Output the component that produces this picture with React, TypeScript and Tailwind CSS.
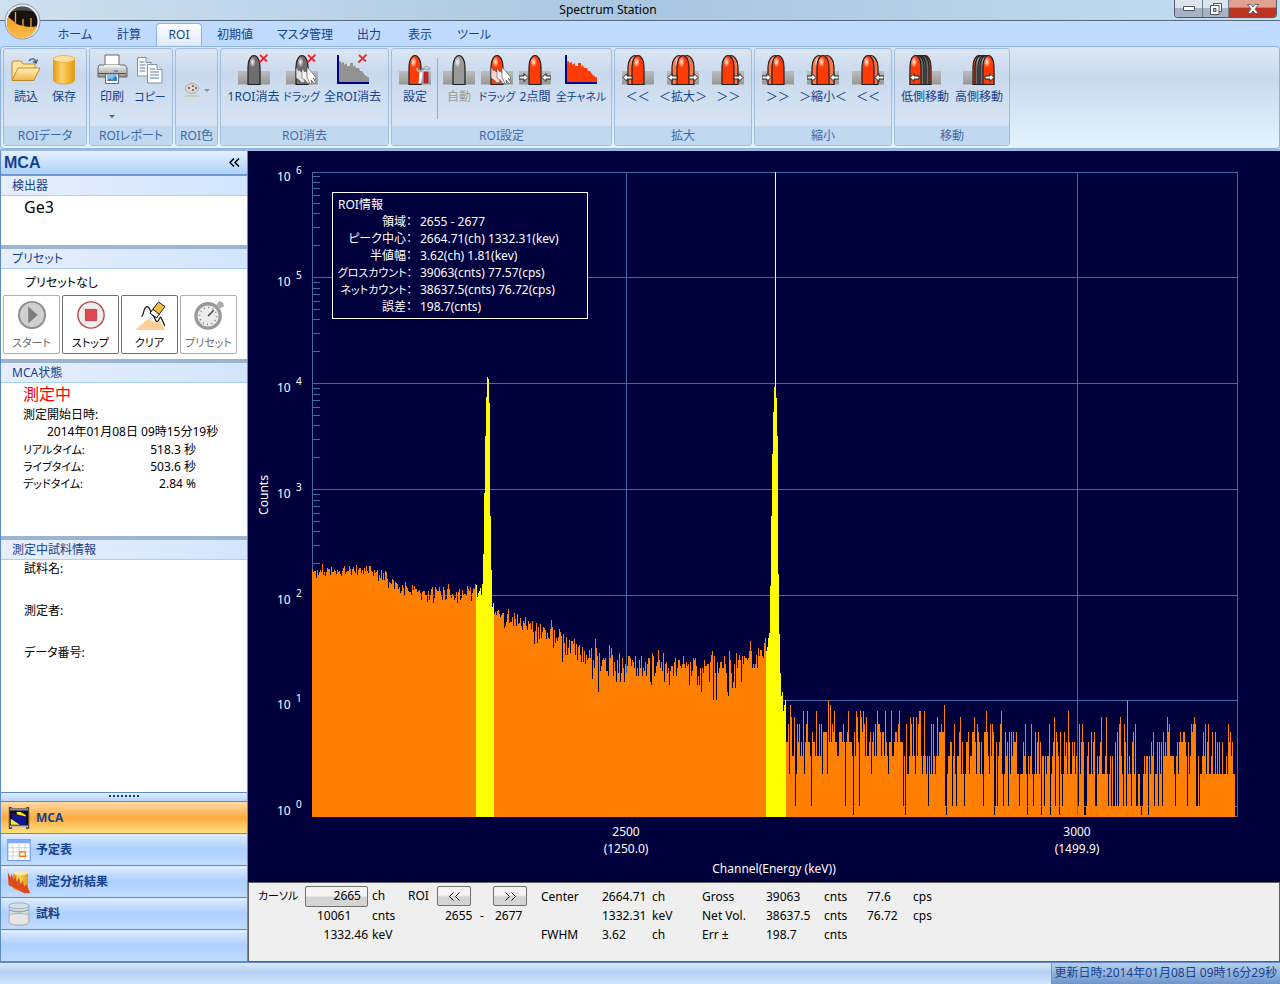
// App.tsx
// Spectrum Station main window: ribbon, MCA side panel and log-scale spectrum view

import type { ReactNode } from 'react';

/* ---------- icons ---------- */

const RED = '#ff3c05';
const GREY = '#6e6e6e';

function Hump({ x = 10, w = 12, fill = RED }: { x?: number; w?: number; fill?: string }) {
  const r = x + w;
  const m = x + w / 2;
  return (
    <g>
      <path
        d={`M${x} 30.5V13C${x} 6 ${m - 3} 1.5 ${m} 1.5S${r} 6 ${r} 13V30.5z`}
        fill={fill}
        stroke="#1e1e1e"
        strokeWidth="1.2"
      />
      <ellipse cx={m - 1.5} cy="8" rx="3.2" ry="5.5" fill="url(#shine)" />
    </g>
  );
}

function Blocks() {
  return <path d="M0 17h32v13.500H0z" fill="url(#block)" />;
}

function Arrow({ x, dir }: { x: number; dir: 'l' | 'r' }) {
  const d = dir === 'l' ? 'M0 23.500l4-4v2.500h5v3H4v2.500z' : 'M9 23.500l-4-4v2.500H0v3h5v2.500z';
  return <path d={d} transform={`translate(${x} 0)`} fill="#fff" stroke="#222" strokeWidth="1" />;
}

function RedCross() {
  return <path d="M22 1l7 6.500M29.500 0.500l-8 8" stroke="#ee2630" strokeWidth="1.8" fill="none" />;
}

function Icon({ children, size = 'size-8' }: { children: ReactNode; size?: string }) {
  return (
    <svg viewBox="0 0 32 32" className={`${size} shrink-0`} aria-hidden="true">
      {children}
    </svg>
  );
}

function SharedDefs() {
  return (
    <svg className="absolute size-0" aria-hidden="true">
      <defs>
        <linearGradient id="block" x1="0" y1="0" x2="0" y2="1">
          <stop offset="0" stopColor="#bdbdbd" />
          <stop offset="1" stopColor="#979797" />
        </linearGradient>
        <radialGradient id="shine">
          <stop offset="0" stopColor="#fff" stopOpacity="0.95" />
          <stop offset="1" stopColor="#fff" stopOpacity="0" />
        </radialGradient>
        <linearGradient id="gold" x1="0" x2="1">
          <stop offset="0" stopColor="#e89c10" />
          <stop offset="0.4" stopColor="#ffd36a" />
          <stop offset="1" stopColor="#e59a0c" />
        </linearGradient>
        <linearGradient id="folder" x1="0" y1="0" x2="0" y2="1">
          <stop offset="0" stopColor="#fff0bd" />
          <stop offset="1" stopColor="#efb447" />
        </linearGradient>
        <linearGradient id="silver" x1="0" y1="0" x2="0" y2="1">
          <stop offset="0" stopColor="#f6f6f6" />
          <stop offset="1" stopColor="#8f8f8f" />
        </linearGradient>
        <linearGradient id="orb" x1="0" y1="0" x2="0" y2="1">
          <stop offset="0" stopColor="#f09a20" />
          <stop offset="1" stopColor="#ffc04d" />
        </linearGradient>
      </defs>
    </svg>
  );
}

const Hands = () => (
  <g fill="#fff" stroke="#444" strokeWidth="0.6">
    <path d="M10 13l3 4 1-2 1 3 2-2 1 4 1 8-3 1-3-3-3-2z" opacity="0.8" />
    <path d="M16 14l3 4 1-2 1 3 2-2 2 4 0 7-3 2-3-4-3-2z" opacity="0.9" />
    <path d="M21 13l7 8 2 3-1 2-2-2 3 5-1 1-4-4 1 4-2 0-2-5-1-2z" />
  </g>
);

const FolderIcon = () => (
  <Icon>
    <path d="M2 26V9l1-2h8l2 3h12v4" fill="#ffe3a0" stroke="#c08a2c" />
    <path d="M2 26.500L8 14h22l-6 12.500z" fill="url(#folder)" stroke="#c08a2c" />
    <path d="M19 7c2-3 6-3 7 1M27.500 5.500L26 9l-3-1.500" fill="none" stroke="#47637f" strokeWidth="1.4" />
  </Icon>
);

const CylinderIcon = () => (
  <Icon>
    <path d="M5.500 5v21c0 2 5 4 10.500 4s10.500-2 10.500-4V5z" fill="url(#gold)" stroke="#d9930f" strokeWidth="0.8" />
    <ellipse cx="16" cy="5" rx="10.5" ry="3.5" fill="#ffe0a0" stroke="#e3a93c" strokeWidth="0.8" />
  </Icon>
);

const PrinterIcon = () => (
  <Icon>
    <path d="M9 1h14v11H9z" fill="#fff" stroke="#667" />
    <path d="M3 11h26l2 3v9H2v-9z" fill="url(#silver)" stroke="#666" />
    <path d="M8 11h16v2H8z" fill="#eee" />
    <path d="M2 19.500h28" stroke="#555" />
    <path d="M18 17h4" stroke="#3b7fe0" strokeWidth="1.5" />
    <path d="M9.500 20h13v9.500h-13z" fill="#fff" stroke="#667" />
    <path d="M11 21h10v6H11z" fill="#7cc3f2" />
    <path d="M11 27l3-3 2 2 3-4 2 2v3z" fill="#2f7ad1" />
    <circle cx="13" cy="26" r="1" fill="#e64a3a" />
  </Icon>
);

const CopyIcon = () => (
  <Icon>
    <path d="M3.500 3.500H12l5 5V22H3.500z" fill="#fff" stroke="#7f93b0" />
    <path d="M12 3.500v5h5" fill="#d7e1f0" stroke="#7f93b0" />
    <path d="M5.500 8h5M5.500 11h6M5.500 14h6M5.500 17h6" stroke="#5f7ba5" />
    <path d="M13.500 10.500H23l5 5V29H13.500z" fill="#fff" stroke="#7f93b0" />
    <path d="M23 10.500v5h5" fill="#d7e1f0" stroke="#7f93b0" />
    <path d="M16 15h5M16 18h9M16 21h9M16 24h9" stroke="#5f7ba5" />
  </Icon>
);

const PaletteIcon = () => (
  <svg viewBox="0 0 16 16" className="size-4" aria-hidden="true">
    <ellipse cx="8" cy="6.500" rx="6.500" ry="5" fill="#ddd6c8" stroke="#aaa59c" strokeWidth="0.8" />
    <path d="M4 5h2v2H4zM8 3h2v2H8zM8 7h2v2H8zM11 5h2v2h-2z" fill="#7b7b7b" />
    <path d="M1 13h14v2H1z" fill="#cfcac4" />
  </svg>
);

const bars = 'M1 8l3-1v2l3-1v3l3-2v3h3V9h3v4l2-2 1 3h3l1 3h2l2 3 2 2 4 2v5H1z';

const icons: Record<string, ReactNode> = {
  folder: <FolderIcon />,
  cylinder: <CylinderIcon />,
  printer: <PrinterIcon />,
  copy: <CopyIcon />,
  clearOne: <Icon><Blocks /><Hump fill={GREY} /><RedCross /></Icon>,
  clearDrag: <Icon><Blocks /><Hump fill={GREY} /><Hands /><RedCross /></Icon>,
  clearAll: <Icon><path d={bars} fill="#929292" /><path d="M1 1v28h31" fill="none" stroke="#00008c" strokeWidth="2" /><RedCross /></Icon>,
  setup: (
    <Icon>
      <Blocks />
      <Hump />
      <path d="M21 29.500l1-13" stroke="#fff" strokeWidth="3" />
      <path d="M18 14c0 4 6 5 6 0" fill="none" stroke="#9fb2c2" strokeWidth="2" />
      <path d="M23 15l4-3 4 2-1 2-3-1z" fill="#cfd6dc" stroke="#777" strokeWidth="0.6" />
      <path d="M25 18h4v11h-4z" fill="#cf2031" stroke="#7f1b22" strokeWidth="0.6" />
    </Icon>
  ),
  auto: <Icon><Blocks /><Hump fill="#9a9a9a" /></Icon>,
  drag: <Icon><Blocks /><Hump /><Hands /></Icon>,
  twoPoint: <Icon><Blocks /><Hump /><Arrow x={0} dir="r" /><Arrow x={23} dir="l" /></Icon>,
  allChannels: <Icon><path d={bars} fill={RED} /><path d="M1 1v28h31" fill="none" stroke="#00008c" strokeWidth="2" /></Icon>,
  growLeft: <Icon><Blocks /><Hump x={6} w={14} fill="#ff7448" /><Hump x={10} /><Arrow x={1} dir="l" /></Icon>,
  growBoth: <Icon><Blocks /><Hump x={5} w={14} fill="#ff7448" /><Hump x={13} w={14} fill="#ff7448" /><Hump /><Arrow x={1} dir="l" /><Arrow x={22} dir="r" /></Icon>,
  growRight: <Icon><Blocks /><Hump x={12} w={14} fill="#ff7448" /><Hump x={10} /><Arrow x={22} dir="r" /></Icon>,
  shrinkLeft: <Icon><Blocks /><Hump x={6} w={14} fill="#ff7448" /><Hump x={10} /><Arrow x={0} dir="r" /></Icon>,
  shrinkBoth: <Icon><Blocks /><Hump x={5} w={14} fill="#ff7448" /><Hump x={13} w={14} fill="#ff7448" /><Hump /><Arrow x={0} dir="r" /><Arrow x={23} dir="l" /></Icon>,
  shrinkRight: <Icon><Blocks /><Hump x={12} w={14} fill="#ff7448" /><Hump x={10} /><Arrow x={23} dir="l" /></Icon>,
  moveLow: <Icon><Blocks /><Hump x={10} /><Hump x={8} fill={GREY} /><Hump x={5} fill={GREY} /><Hump x={3} fill={GREY} /><Hump x={1} w={11} /><Arrow x={1} dir="l" /></Icon>,
  moveHigh: <Icon><Blocks /><Hump x={10} /><Hump x={12} fill={GREY} /><Hump x={15} fill={GREY} /><Hump x={17} fill={GREY} /><Hump x={20} w={11} /><Arrow x={22} dir="r" /></Icon>,
};

/* ---------- ribbon ---------- */

const tabs = [
  { label: 'ホーム', width: 'w-[54px]' },
  { label: '計算', width: 'w-[54px]' },
  { label: 'ROI', width: 'w-[46px]' },
  { label: '初期値', width: 'w-[66px]' },
  { label: 'マスタ管理', width: 'w-[74px]' },
  { label: '出力', width: 'w-[54px]' },
  { label: '表示', width: 'w-[48px]' },
  { label: 'ツール', width: 'w-[60px]' },
];

type Item = {
  label: string;
  icon: string;
  width: string;
  menu?: boolean;
  disabled?: boolean;
  divider?: boolean;
  small?: boolean;
};

const groups: { title: string; width: string; items: Item[] }[] = [
  {
    title: 'ROIデータ',
    width: 'w-[84px]',
    items: [
      { label: '読込', icon: 'folder', width: 'w-[38px]' },
      { label: '保存', icon: 'cylinder', width: 'w-[38px]' },
    ],
  },
  {
    title: 'ROIレポート',
    width: 'w-[84px]',
    items: [
      { label: '印刷', icon: 'printer', width: 'w-[38px]', menu: true },
      { label: 'コピー', icon: 'copy', width: 'w-[38px]', small: true },
    ],
  },
  { title: 'ROI色', width: 'w-[43px]', items: [] },
  {
    title: 'ROI消去',
    width: 'w-[169px]',
    items: [
      { label: '1ROI消去', icon: 'clearOne', width: 'w-[56px]' },
      { label: 'ドラッグ', icon: 'clearDrag', width: 'w-[40px]', small: true },
      { label: '全ROI消去', icon: 'clearAll', width: 'w-[62px]' },
    ],
  },
  {
    title: 'ROI設定',
    width: 'w-[221px]',
    items: [
      { label: '設定', icon: 'setup', width: 'w-[40px]', divider: true },
      { label: '自動', icon: 'auto', width: 'w-[38px]', disabled: true },
      { label: 'ドラッグ', icon: 'drag', width: 'w-[38px]', small: true },
      { label: '2点間', icon: 'twoPoint', width: 'w-[38px]' },
      { label: '全チャネル', icon: 'allChannels', width: 'w-[54px]', small: true },
    ],
  },
  {
    title: '拡大',
    width: 'w-[138px]',
    items: [
      { label: '＜＜', icon: 'growLeft', width: 'w-[46px]' },
      { label: '＜拡大＞', icon: 'growBoth', width: 'w-[46px]' },
      { label: '＞＞', icon: 'growRight', width: 'w-[46px]' },
    ],
  },
  {
    title: '縮小',
    width: 'w-[138px]',
    items: [
      { label: '＞＞', icon: 'shrinkLeft', width: 'w-[46px]' },
      { label: '＞縮小＜', icon: 'shrinkBoth', width: 'w-[46px]' },
      { label: '＜＜', icon: 'shrinkRight', width: 'w-[46px]' },
    ],
  },
  {
    title: '移動',
    width: 'w-[116px]',
    items: [
      { label: '低側移動', icon: 'moveLow', width: 'w-[54px]' },
      { label: '高側移動', icon: 'moveHigh', width: 'w-[54px]' },
    ],
  },
];

function TitleBar() {
  return (
    <header className="flex h-[21px] items-start border-b border-[#5b6b78] bg-linear-to-r from-[#cfe0ef] via-[#a9c6e2] to-[#c2def3] pr-[3px] pl-[42px]">
      <h1 className="flex-1 text-center text-xs leading-5 text-black">Spectrum Station</h1>
      <div className="flex h-[18px] overflow-hidden rounded-b border border-t-0 border-[#4e5c6c]">
        <button aria-label="最小化" className="flex w-7 items-center justify-center border-r border-[#6d7c8c] bg-linear-to-b from-[#dde5ec] from-45% to-[#a5b3c4] to-50%">
          <svg viewBox="0 0 12 6" className="h-1.5 w-3"><path d="M.5.5h11v4H.5z" fill="#fff" stroke="#4a5263" /></svg>
        </button>
        <button aria-label="元に戻す" className="flex w-[26px] items-center justify-center border-r border-[#6d7c8c] bg-linear-to-b from-[#dde5ec] from-45% to-[#a5b3c4] to-50%">
          <svg viewBox="0 0 12 12" className="size-3">
            <path d="M3.500.5h8v8h-8z" fill="#fff" stroke="#4a5263" />
            <path d="M.5 2.500h8.500v9H.5z" fill="#fff" stroke="#4a5263" />
            <path d="M3.500 5.500h2.500v3H3.500z" fill="#b6c2d0" stroke="#4a5263" />
          </svg>
        </button>
        <button aria-label="閉じる" className="flex w-[47px] items-center justify-center bg-linear-to-b from-[#e0a193] from-40% to-[#bd3420] to-50%">
          <svg viewBox="0 0 12 10" className="h-2.5 w-3"><path d="M.5.5h3.500l2 2.500 2-2.500h3.500L8 5l3.500 4.500H8L6 7 4 9.500H.5L4 5z" fill="#fff" stroke="#4a4a63" strokeWidth="0.8" /></svg>
        </button>
      </div>
    </header>
  );
}

function AppOrb() {
  return (
    <button aria-label="メニュー" className="absolute top-[3px] left-1 z-10 size-[37px]">
      <svg viewBox="0 0 37 37" className="size-full">
        <circle cx="18.500" cy="18.500" r="17.500" fill="#e8edf2" stroke="#8696a8" />
        <circle cx="18.500" cy="18.500" r="15" fill="#17120f" />
        <path d="M4.300 14c2 1 3 3 5 4 3 3 5 4 8 4.500 5 1 9 2.500 15.300 0.500A15 15 0 1 1 4.300 14z" fill="url(#orb)" />
        <path d="M11.500 9v11M19 16v8M27 15v9" stroke="#f6a62c" strokeWidth="1.3" />
        <path d="M6 9c6-7 19-7 25 0-8-2-17-2-25 0z" fill="#fff" opacity="0.25" />
      </svg>
    </button>
  );
}

function RibbonButton({ item }: { item: Item }) {
  return (
    <>
      <button
        disabled={item.disabled}
        className={`${item.width} flex flex-col items-center whitespace-nowrap text-[#15428b] disabled:text-[#9b9b9b]`}
      >
        {icons[item.icon]}
        <span className={`mt-[3px] flex w-0 justify-center leading-4 ${item.small ? 'text-[11px]' : 'text-xs'}`}>{item.label}</span>
        {item.menu && <span className="mt-2.5 border-x-3 border-t-3 border-x-transparent border-t-[#47688f]" />}
      </button>
      {item.divider && <span className="mx-[2px] mt-1 h-[61px] w-px bg-[#8eb0dc]" />}
    </>
  );
}

function Ribbon() {
  return (
    <>
      <nav className="flex h-[25px] items-end bg-[#bfdbff] pl-12">
        {tabs.map((t) => (
          <button
            key={t.label}
            className={`${t.width} h-[23px] text-xs leading-5 whitespace-nowrap text-[#15428b] ${
              t.label === 'ROI' ? 'rounded-t border border-b-0 border-[#8db2e3] bg-linear-to-b from-white to-[#dfe9f5]' : ''
            }`}
          >
            {t.label}
          </button>
        ))}
      </nav>
      <div className="border-b-2 border-[#9cb9d9] bg-[#bfdbff]">
        <div className="flex h-[103px] gap-[2px] rounded border border-[#8db2e3] bg-linear-to-b from-[#dde8f4] via-[#c9d9ed] via-30% to-[#e4f4ff] px-[2px] pt-px pb-[2px]">
          {groups.map((g) => (
            <section key={g.title} className={`${g.width} flex shrink-0 flex-col rounded-[3px] border border-[#9fbedd] bg-linear-to-b from-[#dce6f2] via-[#c9d9ed] via-25% to-[#dbe8f5]`}>
              <div className="flex flex-1 justify-center pt-[5px]">
                {g.items.length === 0 ? (
                  <button disabled aria-label="ROI色" className="flex items-center gap-1">
                    <PaletteIcon />
                    <span className="border-x-3 border-t-3 border-x-transparent border-t-[#8d8d8d]" />
                  </button>
                ) : (
                  g.items.map((item) => <RibbonButton key={item.icon} item={item} />)
                )}
              </div>
              <h2 className="h-[19px] bg-[#c1d8f1] text-center text-xs leading-[19px] whitespace-nowrap text-[#3e6aaa]">{g.title}</h2>
            </section>
          ))}
        </div>
      </div>
    </>
  );
}

/* ---------- side panel ---------- */

function Section({ title, height, last, children }: { title: string; height: string; last?: boolean; children: ReactNode }) {
  return (
    <section className={`${height} ${last ? '' : 'border-b-4 border-[#9bb4d0]'} overflow-hidden bg-white`}>
      <h3 className="h-5 border-b border-[#a9cffb] bg-linear-to-r from-[#e6eefc] to-[#d3e6fe] pl-[11px] text-xs leading-[19px] text-[#15428b]">{title}</h3>
      {children}
    </section>
  );
}

const controls = [
  {
    label: 'スタート',
    disabled: true,
    icon: (
      <>
        <circle cx="16" cy="16" r="14" fill="#cfcfcf" stroke="#8d8d8d" strokeWidth="2" />
        <path d="M12 7l10 9-10 9z" fill="#7d7d7d" />
      </>
    ),
  },
  {
    label: 'ストップ',
    icon: (
      <>
        <circle cx="16" cy="16" r="14" fill="#f3eeee" stroke="#b8444c" strokeWidth="1.5" />
        <path d="M10 10h12v12H10z" fill="#db4850" stroke="#b8444c" />
      </>
    ),
  },
  {
    label: 'クリア',
    icon: (
      <>
        <path d="M0 32l14-12 7 4 5-3 6 11z" fill="#ffcf97" />
        <path d="M7 18c3-3 2-11 6-11 3 0 3 6 6 9 3 4 3 9 6 6 3-7 2-4 7 6" fill="none" stroke="#111" strokeWidth="1.3" />
        <path d="M16 14l9-12 7 5-9 12z" fill="#f0bd45" stroke="#111" />
        <path d="M16 14l3-4 7 5-3 4z" fill="#fff" stroke="#111" />
      </>
    ),
  },
  {
    label: 'プリセット',
    disabled: true,
    icon: (
      <>
        <path d="M24 5l3-4 4 2 1 4-4 2z" fill="#aaa" />
        <circle cx="15" cy="17" r="13" fill="#ececec" stroke="#999" strokeWidth="3.5" />
        <circle cx="15" cy="17" r="9" fill="none" stroke="#777" strokeWidth="1.6" strokeDasharray="1 3.700" />
        <path d="M15 17l6-6" stroke="#444" strokeWidth="1.6" />
      </>
    ),
  },
];

const readings = [
  { name: 'リアルタイム:', value: '518.3 秒' },
  { name: 'ライブタイム:', value: '503.6 秒' },
  { name: 'デッドタイム:', value: '2.84 %' },
];

const navItems = [
  {
    label: 'MCA',
    icon: (
      <>
        <path d="M3 2h3v28H3zM26 2h3v28h-3z" fill="#777" stroke="#222" />
        <path d="M4 3h24v24H4z" fill="#101018" />
        <path d="M4 3h24v3H4z" fill="#8c8c8c" />
        <path d="M7 9l7 4v-3l11 5v10H7z" fill="#14149a" />
        <path d="M13 8h5l7 4v2l-12-3zM5 17l12 8H5z" fill="#ffee22" />
        <path d="M4 26h24v2H4z" fill="#bbb" />
      </>
    ),
  },
  {
    label: '予定表',
    icon: (
      <>
        <path d="M1 2h30v28H1z" fill="#fff" stroke="#6d96ff" strokeWidth="1.5" />
        <path d="M1 2h30v5H1z" fill="#86a7ff" />
        <path d="M8 8v21M16 8v21M24 8v21M2 13h28M2 18.500h28M2 24h28" stroke="#c4c4c4" />
        <path d="M17 18.500h7.500v6H17z" fill="none" stroke="#ff7000" strokeWidth="1.5" />
      </>
    ),
  },
  {
    label: '測定分析結果',
    icon: (
      <>
        <path d="M8 4v20c0 5 20 5 20 0V4z" fill="url(#gold)" />
        <ellipse cx="18" cy="4" rx="10" ry="3" fill="#ffe6b0" />
        <path d="M1 3l4 7 1-5 3 8 2-6 2 9 3-6 2 9 3-5 2 8 3-3 5 12-8 0L2 20z" fill="#dd4b1c" />
      </>
    ),
  },
  {
    label: '試料',
    icon: (
      <>
        <path d="M3 5v22c0 5 26 5 26 0V5z" fill="#d7dce0" stroke="#9aa5ab" />
        <path d="M3 17c6-2 20-2 26 0v10c0 5-26 5-26 0z" fill="#e9e4e4" stroke="#a6a6a6" />
        <ellipse cx="16" cy="5" rx="13.500" ry="4" fill="#d4e0e6" stroke="#8ba1ad" />
        <path d="M3 10c6 4 20 4 26 0" fill="none" stroke="#93a5ae" strokeWidth="2" />
      </>
    ),
  },
];

function SidePanel() {
  return (
    <aside className="flex w-[248px] shrink-0 flex-col border-x border-[#5b8bcb] bg-white">
      <div className="flex h-[25px] items-center justify-between border-b-2 border-[#6f9ad3] bg-linear-to-b from-[#e6f0ff] to-[#aed0fb] pr-[7px] pl-[3px]">
        <h2 className="font-['Liberation_Sans',Arial,sans-serif] text-base leading-6 font-bold text-[#15428b]">MCA</h2>
        <button aria-label="折りたたむ">
          <svg viewBox="0 0 11 9" className="h-[9px] w-[11px]"><path d="M5 .5l-4 4 4 4M10 .5l-4 4 4 4" fill="none" stroke="#000" strokeWidth="1.5" /></svg>
        </button>
      </div>

      <Section title="検出器" height="h-[73px]">
        <p className="pl-[23px] text-base leading-[22px]">Ge3</p>
      </Section>

      <Section title="プリセット" height="h-[114px]">
        <p className="pt-1 pl-6 text-xs leading-5">プリセットなし</p>
        <div className="mt-[2px] flex gap-[2px] pl-[2px]">
          {controls.map((c) => (
            <button
              key={c.label}
              disabled={c.disabled}
              className="flex h-[59px] w-[57px] flex-col items-center rounded-xs border border-[#707070] bg-white pt-1 whitespace-nowrap disabled:border-[#b0b0b0] disabled:text-[#6d6d6d]"
            >
              <Icon size="size-[30px]">{c.icon}</Icon>
              <span className="mt-[5px] text-[11px] leading-4">{c.label}</span>
            </button>
          ))}
        </div>
      </Section>

      <Section title="MCA状態" height="h-[177px]">
        <p className="pl-[22px] text-base leading-[22px] text-[#f00]">測定中</p>
        <p className="pl-[22px] text-xs leading-5">測定開始日時:</p>
        <p className="pl-[46px] text-xs leading-[14px]">2014年01月08日 09時15分19秒</p>
        <dl className="mt-[2px] pr-[51px] pl-[22px] text-xs leading-[17px]">
          {readings.map((r) => (
            <div key={r.name} className="flex justify-between">
              <dt className="text-[11px]">{r.name}</dt>
              <dd>{r.value}</dd>
            </div>
          ))}
        </dl>
      </Section>

      <Section title="測定中試料情報" height="flex-1" last>
        <ul className="flex flex-col gap-[26px] pt-px pl-[23px] text-xs leading-4">
          <li>試料名:</li>
          <li>測定者:</li>
          <li>データ番号:</li>
        </ul>
      </Section>

      <div className="flex h-2.5 items-start justify-center gap-[2px] border-y border-[#5b8bcb] bg-linear-to-b from-[#e3efff] to-[#b5d3f8] pt-[2px]">
        {Array.from({ length: 8 }, (_, i) => (
          <span key={i} className="size-[2px] bg-[#1c3a66]" />
        ))}
      </div>
      <nav>
        {navItems.map((n, i) => (
          <button
            key={n.label}
            className={`flex h-8 w-full items-center gap-[5px] border-b border-[#5b8bcb] bg-linear-to-b pl-1.5 text-xs font-bold text-[#15428b] ${
              i === 0
                ? 'from-[#ffd9a3] via-[#ffab3f] via-50% to-[#fee07b]'
                : 'from-[#e0edff] via-[#accfff] via-50% to-[#c2dcff]'
            }`}
          >
            <Icon size="size-6">{n.icon}</Icon>
            {n.label}
          </button>
        ))}
        <div className="h-8 border-b border-[#5b8bcb] bg-linear-to-b from-[#e0edff] via-[#accfff] via-50% to-[#c2dcff]" />
      </nav>
    </aside>
  );
}

/* ---------- spectrum ---------- */

const PLOT_W = 925;
const PLOT_H = 644;
const DECADE = 105.7;
const gridY = [0, 105, 211, 317, 423, 528, 634];

// mean counts per column, interpolated between these points in log space
const baseline: [number, number][] = [
  [0, 165], [62, 172], [74, 150], [92, 115], [108, 105], [163, 103], [182, 70], [210, 56], [240, 40],
  [270, 28], [292, 22], [330, 20], [400, 20], [440, 24], [454, 27], [474, 4.800], [600, 4.200], [700, 3.400], [925, 3],
];

// column tops of the two Co-60 lines
const lines: { from: number; tops: number[] }[] = [
  { from: 164, tops: [413, 425, 421, 419, 416, 423, 412, 382, 321, 264, 225, 205, 207, 231, 344, 398, 435, 431] },
  { from: 454, tops: [479, 475, 466, 461, 414, 344, 282, 240, 215, 0, 226, 264, 402, 462, 501, 524, 520, 539, 533, 528] },
];

function meanAt(x: number) {
  const i = Math.max(1, baseline.findIndex(([bx]) => bx >= x));
  const [x0, m0] = baseline[i - 1];
  const [x1, m1] = baseline[i];
  return m0 * Math.pow(m1 / m0, (x - x0) / (x1 - x0));
}

function buildColumns() {
  let seed = 20140108;
  const rand = () => {
    seed = (seed * 1664525 + 1013904223) % 4294967296;
    return (seed + 1) / 4294967297;
  };
  const cols: string[] = [];
  for (let x = 0; x < PLOT_W - 2; x++) {
    const mean = meanAt(x);
    let n = 0;
    if (mean > 12) {
      const g = Math.sqrt(-2 * Math.log(rand())) * Math.cos(2 * Math.PI * rand());
      n = Math.max(10, Math.round(mean + g * Math.sqrt(mean)));
    } else {
      let p = rand();
      while (p > Math.exp(-mean)) {
        n++;
        p *= rand();
      }
    }
    const y = n === 0 ? PLOT_H - 1 : Math.round(634 - DECADE * Math.log10(n));
    cols.push(`M${x} ${PLOT_H + 1}V${y}h1V${PLOT_H + 1}z`);
  }
  return cols.join('');
}

const spectrumPath = buildColumns();

function Spectrum() {
  return (
    <svg viewBox="0 0 1032 730" preserveAspectRatio="xMinYMin meet" className="block size-full">
      <g transform="translate(64 21)">
        <g fill="none" stroke="#3b6ea5" shapeRendering="crispEdges">
          {gridY.map((y) => (
            <path key={y} d={`M0 ${y + 0.5}H${PLOT_W}`} />
          ))}
          {gridY.slice(1).map((y) =>
            [2, 3, 4, 5, 6, 7, 8, 9].map((n) => (
              <path key={`${y}-${n}`} d={`M0 ${Math.round(y - DECADE * Math.log10(n)) + 0.5}h8`} />
            )),
          )}
          <path d={`M.5 0V${PLOT_H}H925.500V0M314.500 0V${PLOT_H}M765.500 0V${PLOT_H}`} />
        </g>
        <path d={spectrumPath} fill="#ff8000" shapeRendering="crispEdges" />
        {lines.map((l) => (
          <g key={l.from} shapeRendering="crispEdges">
            <path d={`M${l.from} 410h${l.tops.length}v130h-${l.tops.length}z`} fill="#00003c" />
            <path d={`M${l.from} 423.500h${l.tops.length}M${l.from} 528.500h${l.tops.length}`} stroke="#3b6ea5" />
            <path
              d={l.tops.map((t, i) => `M${l.from + i} ${PLOT_H + 1}V${t}h1V${PLOT_H + 1}z`).join('')}
              fill="#ff0"
            />
          </g>
        ))}
        <path d="M463.500 0v215" stroke="#ffffd0" shapeRendering="crispEdges" />
      </g>
      <g fill="#fff" fontSize="12">
        {gridY.map((y, i) => (
          <text key={y} x="29" y={y + 30}>
            10
            <tspan x="48" dy="-7" fontSize="10">{6 - i}</tspan>
          </text>
        ))}
        <g textAnchor="middle">
          <text x="378" y="685">2500</text>
          <text x="378" y="702">(1250.0)</text>
          <text x="829" y="685">3000</text>
          <text x="829" y="702">(1499.9)</text>
          <text x="526" y="722">Channel(Energy (keV))</text>
          <text transform="translate(20 344) rotate(-90)">Counts</text>
        </g>
      </g>
    </svg>
  );
}

const roiInfo = [
  { name: '領域：', value: '2655 - 2677' },
  { name: 'ピーク中心：', value: '2664.71(ch) 1332.31(kev)' },
  { name: '半値幅：', value: '3.62(ch) 1.81(kev)' },
  { name: 'グロスカウント：', value: '39063(cnts) 77.57(cps)', small: true },
  { name: 'ネットカウント：', value: '38637.5(cnts) 76.72(cps)', small: true },
  { name: '誤差：', value: '198.7(cnts)' },
];

function RoiInfo() {
  return (
    <div className="absolute top-[41px] left-[84px] w-64 border border-white bg-[#00003c] px-[5px] py-[3px] text-xs leading-[17px] whitespace-nowrap text-white">
      <h3>ROI情報</h3>
      <dl className="grid grid-cols-[74px_1fr] gap-x-2">
        {roiInfo.map((r) => (
          <div key={r.name} className="contents">
            <dt className={`flex justify-end ${r.small ? 'text-[11px]' : ''}`}>{r.name}</dt>
            <dd>{r.value}</dd>
          </div>
        ))}
      </dl>
    </div>
  );
}

const results = [
  ['Center', '2664.71', 'ch', 'Gross', '39063', 'cnts', '77.6', 'cps'],
  ['', '1332.31', 'keV', 'Net Vol.', '38637.5', 'cnts', '76.72', 'cps'],
  ['FWHM', '3.62', 'ch', 'Err ±', '198.7', 'cnts', '', ''],
];

const pushButton = 'rounded-xs border border-[#707070] bg-linear-to-b from-[#f4f4f4] from-45% to-[#d4d4d4] to-55%';

function CursorPanel() {
  return (
    <div className="flex h-20 items-start border border-[#5f5f5f] bg-[#efefef] pt-[2px] pl-[9px] text-xs whitespace-nowrap text-black">
      <div className="grid w-[150px] grid-cols-[47px_67px_1fr] grid-rows-[22px_18px_20px] items-center">
        <span id="cursor-label" className="text-[11px]">カーソル</span>
        <button aria-labelledby="cursor-label" className={`${pushButton} h-[21px] w-[63px] pr-1.5 text-right leading-4`}>2665</button>
        <span>ch</span>
        <span className="col-start-2 pl-3">10061</span>
        <span>cnts</span>
        <span className="col-start-2 pr-1 text-right">1332.46</span>
        <span>keV</span>
      </div>
      <div className="grid w-[133px] grid-cols-[29px_34px_22px_34px] grid-rows-[22px_18px] items-center">
        <span>ROI</span>
        <button aria-label="前のROI" className={`${pushButton} flex h-5 items-center justify-center`}>
          <svg viewBox="0 0 13 9" className="h-[9px] w-[13px]"><path d="M5.500.5l-4 4 4 4M11.500.5l-4 4 4 4" fill="none" stroke="#000" /></svg>
        </button>
        <span />
        <button aria-label="次のROI" className={`${pushButton} flex h-5 items-center justify-center`}>
          <svg viewBox="0 0 13 9" className="h-[9px] w-[13px]"><path d="M1.500.5l4 4-4 4M7.500.5l4 4-4 4" fill="none" stroke="#000" /></svg>
        </button>
        <span className="col-start-2 pl-2">2655</span>
        <span className="text-center">-</span>
        <span className="pl-[2px]">2677</span>
      </div>
      <table className="mt-[2px] table-fixed text-left">
        <tbody>
          {results.map((row) => (
            <tr key={row[5] + row[1]} className="h-[19px] leading-[19px]">
              {row.map((cell, i) => (
                <td key={i} className={['w-[61px]', 'w-[50px]', 'w-[50px]', 'w-16', 'w-[58px]', 'w-[43px]', 'w-[46px]', 'w-10'][i]}>
                  {cell}
                </td>
              ))}
            </tr>
          ))}
        </tbody>
      </table>
    </div>
  );
}

export default function App() {
  return (
    <div className="relative flex h-screen min-h-[600px] flex-col overflow-hidden bg-[#bfdbff] font-['Noto_Sans','Noto_Sans_CJK_JP',sans-serif] text-black [font-feature-settings:'palt']">
      <SharedDefs />
      <TitleBar />
      <AppOrb />
      <Ribbon />
      <div className="flex min-h-0 flex-1">
        <SidePanel />
        <main className="flex min-w-0 flex-1 flex-col">
          <div className="relative min-h-0 flex-1 bg-[#00003c]">
            <Spectrum />
            <RoiInfo />
          </div>
          <CursorPanel />
        </main>
      </div>
      <footer className="flex h-[22px] shrink-0 justify-end border-t border-[#5b8bcb] bg-linear-to-b from-[#dce9fa] via-[#b3d0f4] via-45% to-[#d5e5fa]">
        <p className="border-l border-[#6f93c6] bg-linear-to-b from-[#b7d0f0] to-[#7095c9] px-[3px] text-xs leading-5 text-[#15428b]">
          更新日時:2014年01月08日 09時16分29秒
        </p>
      </footer>
    </div>
  );
}
